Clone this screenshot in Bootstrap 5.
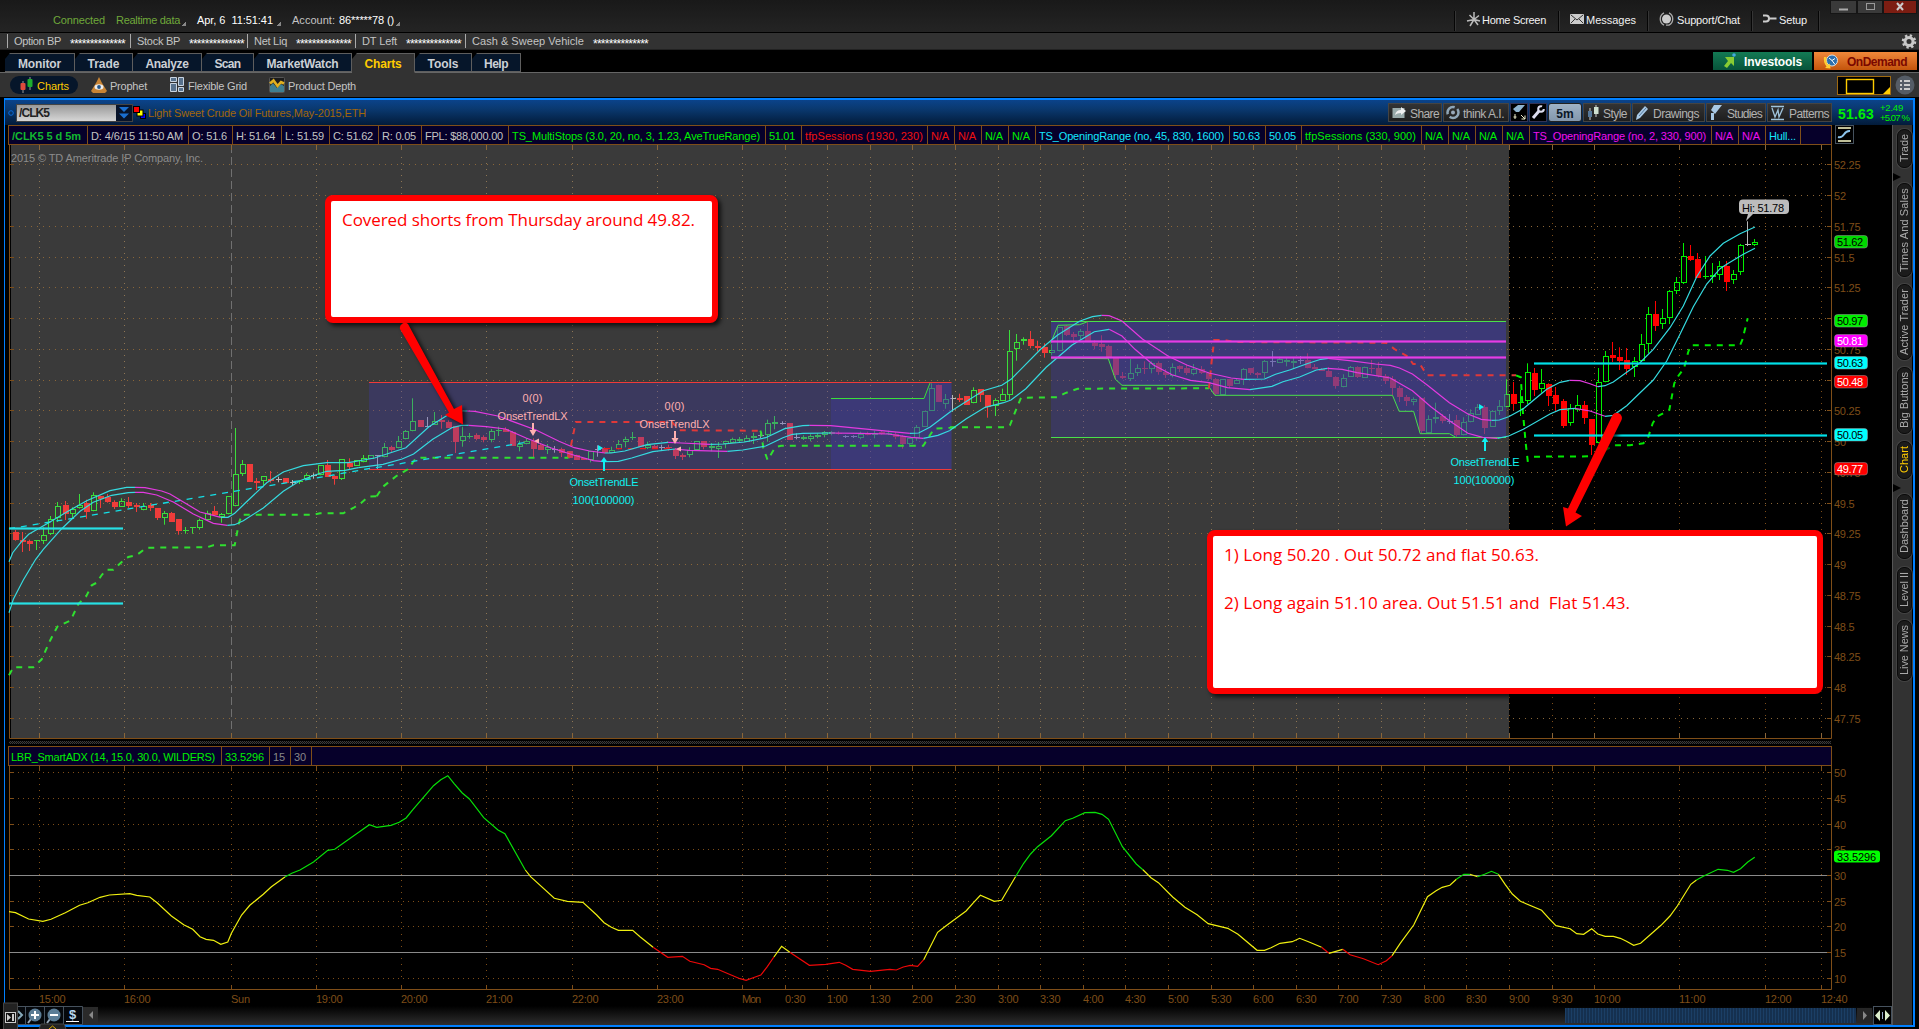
<!DOCTYPE html>
<html lang="en">
<head>
<meta charset="utf-8">
<title>Charts - /CLK5</title>
<link href="https://cdn.jsdelivr.net/npm/bootstrap@5.3.0/dist/css/bootstrap.min.css" rel="stylesheet">
<style>
body{background:#000;font:11px/1 "Liberation Sans",Arial,sans-serif;color:#c4c4c4;width:1919px;height:1029px;overflow:hidden}
svg{display:block;flex:none}
text{font-family:"Liberation Sans",Arial,sans-serif}
span{white-space:nowrap}
.app{height:1029px}
.topbar{height:32px;background:linear-gradient(#191919,#242424);padding-left:53px}
.topbar .stat{height:41px;margin-right:11px}
.tri{width:4px;height:4px;background:linear-gradient(135deg,transparent 50%,#888 50%);margin:6px 0 0 2px}
.menu-i{height:20px;border-left:1px solid #050505;box-shadow:inset 1px 0 #353535;color:#f2f2f2;margin-top:11px;padding:1px 0 0 11px}
.menu-i span{padding-top:3px}
.winbtn{height:14px;background:#3a3a3a;border:1px solid #151515}
.info{height:18px;background:#323232;border-top:1px solid #000;border-bottom:1px solid #222;padding-left:7px}
.info .fld{border-left:1px solid #aaa;padding-left:6px;height:14px}
.stars{color:#fff;padding-top:5px;font-size:12px}
.tabs{height:22px;padding-left:5px;border-bottom:1px solid #666;margin-top:1px}
.tabx{height:19px;background:#06162a;border:1px solid #5e5e5e;border-left:0;font-weight:700;font-size:12px;color:#ccd0d6;padding-top:2px;clip-path:polygon(5px 0,100% 0,100% 100%,0 100%,0 6px)}
.tabx.on{background:#323232;color:#fc0;height:20px;margin-bottom:-1px;border-bottom-color:#323232}
.subnav{height:25px;background:#323232;border-bottom:1px solid #000;padding-left:10px}
.subnav span,.tbtn span,.phead>span,.promo span{position:relative;top:1px}
.pill{width:68px;height:18px;border-radius:9px;background:#06162a;color:#fc0;padding-left:9px}
.promo{height:18px;font-weight:700;font-size:12px;margin-top:1px}
.frame{border-left:1px solid #0080ff;border-right:2px solid #0080ff;border-bottom:2px solid #0080ff;margin:0 4px 0 4px;height:929px}
.phead{height:27px;background:linear-gradient(#0b438a,#0a3970 35%,#021b3a);border-top:2px solid #0080ff;padding-left:3px}
.symbox{width:117px;height:18px;background:linear-gradient(#999,#d6d6d6);border:1px solid #444;color:#222;font-weight:700;font-size:12px}
.tbtn{height:19px;background:linear-gradient(#333,#1e1e1e);border:1px solid #444;color:#b2b2b2;font-size:12px}
.tbtn.dk{background:#000;border-color:#335}
.labels{height:20px;border:1px solid #7f4e18;background:#06002a}
.labels>span{border-right:1px solid #7f4e18;height:18px;line-height:18px;padding:1px 0 0 3px;flex:none}
.g{color:#00f000}.r{color:#f01010}.c{color:#14e8ff}.m{color:#f010f0}
.splitter{height:7px;background:repeating-conic-gradient(#3c3c3c 0 25%,#0a0a0a 0 50%) 0 0/2px 2px;border-top:2px solid #000;border-bottom:2px solid #000;width:1822px}
.side{width:20px;background:#323232;border-left:1px solid #555;padding-top:4px}
.vtab{writing-mode:vertical-rl;transform:rotate(180deg);width:15px;border-radius:7px;background:#1c1c1c;border:1px solid #0a0a0a;box-shadow:0 0 0 1px #424242;color:#aaa;margin-left:4px;flex:none}
.notch{width:8px;height:8px;background:#000;clip-path:polygon(0 0,100% 50%,0 100%)}
.scroll{height:19px;background:linear-gradient(#000,#2e2e2e)}
.thumb{width:291px;height:15px;margin-top:2px;background:repeating-linear-gradient(90deg,#1b3f66 0 1px,#15304f 1px 3px)}
.note{position:absolute;background:#fff;border:6px solid red;border-radius:8px;box-shadow:3px 3px 4px rgba(0,0,0,.7);color:red;font:17px/24px "Open Sans","Noto Sans",sans-serif;padding:7px 11px}
.n1{left:325px;top:195px;width:393px;height:128px}
.n2{left:1207px;top:530px;width:616px;height:164px}
.arrows,.dock{position:absolute}
.arrows{left:0;top:0;pointer-events:none;filter:drop-shadow(3px 2px 2px rgba(0,0,0,.7))}
.dock{left:3px;top:1002px}
</style>
<script src="https://cdn.jsdelivr.net/npm/bootstrap@5.3.0/dist/js/bootstrap.bundle.min.js"></script>
</head>
<body>
<div class="app position-relative d-flex flex-column">

<header class="topbar d-flex">
  <div class="stat d-flex align-items-center" style="color:#6fa83a"><span data-w="52">Connected</span></div>
  <div class="stat d-flex align-items-center" style="color:#6fa83a"><span data-w="64">Realtime data</span><i class="tri"></i></div>
  <div class="stat d-flex align-items-center text-white"><span data-w="76">Apr, 6 &nbsp;11:51:41</span><i class="tri ms-1"></i></div>
  <div class="stat d-flex align-items-center"><span data-w="43">Account:</span><span class="text-white ms-1" data-w="55">86*****78 ()</span><i class="tri"></i></div>
  <div class="ms-auto d-flex">
    <div class="menu-i d-flex" style="width:104px"><svg width="16" height="15" viewBox="0 0 16 15"><path d="M8 7.500V0M8 7.500L3.500 3M8 7.500L13 3.500M8 7.500L1 9M8 7.500L14 9M8 7.500L4 14M8 7.500L12 13" stroke="#bbb" stroke-width="1.500"/></svg><span data-w="64">Home Screen</span></div>
    <div class="menu-i d-flex" style="width:89px"><svg width="16" height="15" viewBox="0 0 16 15"><rect y="2" width="14" height="10" rx="1" fill="#ccc"/><path d="M1 3l6 5 6-5M1 11l4-4M13 11L9 7" stroke="#333" fill="none"/></svg><span data-w="50">Messages</span></div>
    <div class="menu-i d-flex" style="width:104px"><svg width="18" height="15" viewBox="0 0 18 15"><circle cx="7.500" cy="7" r="4.500" fill="#ccc"/><path d="M5 .8A7 7 0 0 0 5 13.200M10 .8A7 7 0 0 1 10 13.200H7" stroke="#aaa" fill="none" stroke-width="1.300"/></svg><span data-w="63">Support/Chat</span></div>
    <div class="menu-i d-flex" style="width:67px"><svg width="16" height="15" viewBox="0 0 16 15"><path d="M0 3.500h3a3 3 0 0 1 0 6H0M5.500 6.500h8" stroke="#ccc" stroke-width="2" fill="none"/></svg><span data-w="28">Setup</span></div>
    <div class="menu-i" style="width:12px"></div>
    <div class="winbtn" style="width:27px"><svg width="25" height="12"><path d="M8 8.500h9" stroke="#aaa" stroke-width="2"/></svg></div>
    <div class="winbtn" style="width:26px"><svg width="24" height="12"><rect x="8.500" y="2.500" width="8" height="6" fill="none" stroke="#999"/></svg></div>
    <div class="winbtn" style="width:34px;background:#7c1d12;margin-right:2px"><svg width="32" height="12"><path d="M13 2l6 7M19 2l-6 7" stroke="#ccc" stroke-width="2"/></svg></div>
  </div>
</header>

<section class="info d-flex align-items-center">
  <div class="fld d-flex align-items-center" style="width:123px"><span data-w="47">Option BP</span><span class="stars" style="margin-left:9px" data-w="55">**************</span></div>
  <div class="fld d-flex align-items-center" style="width:117px"><span data-w="43">Stock BP</span><span class="stars" style="margin-left:9px" data-w="55">**************</span></div>
  <div class="fld d-flex align-items-center" style="width:108px"><span data-w="33">Net Liq</span><span class="stars" style="margin-left:9px" data-w="55">**************</span></div>
  <div class="fld d-flex align-items-center" style="width:110px"><span data-w="35">DT Left</span><span class="stars" style="margin-left:9px" data-w="55">**************</span></div>
  <div class="fld d-flex align-items-center"><span data-w="112">Cash &amp; Sweep Vehicle</span><span class="stars" style="margin-left:9px" data-w="55">**************</span></div>
  <svg class="ms-auto" style="margin-right:2px" width="16" height="15" viewBox="-8 -7.500 16 15"><circle r="4" fill="none" stroke="#c8c8c8" stroke-width="3"/><circle r="6" fill="none" stroke="#c8c8c8" stroke-width="2.500" stroke-dasharray="2.300 2.412"/></svg>
</section>

<nav class="tabs d-flex align-items-end">
  <div class="tabx d-flex justify-content-center align-items-center" style="width:70px"><span data-w="43">Monitor</span></div>
  <div class="tabx d-flex justify-content-center align-items-center" style="width:58px"><span data-w="32">Trade</span></div>
  <div class="tabx d-flex justify-content-center align-items-center" style="width:69px"><span data-w="43">Analyze</span></div>
  <div class="tabx d-flex justify-content-center align-items-center" style="width:52px"><span data-w="26">Scan</span></div>
  <div class="tabx d-flex justify-content-center align-items-center" style="width:98px"><span data-w="72">MarketWatch</span></div>
  <div class="tabx on d-flex justify-content-center align-items-center" style="width:63px"><span data-w="37">Charts</span></div>
  <div class="tabx d-flex justify-content-center align-items-center" style="width:57px"><span data-w="31">Tools</span></div>
  <div class="tabx d-flex justify-content-center align-items-center" style="width:49px"><span data-w="24">Help</span></div>
  <div class="ms-auto d-flex align-self-start" style="gap:2px;margin-right:2px">
    <div class="promo d-flex align-items-center text-white" style="width:99px;background:linear-gradient(#137a54,#07533a);padding-left:9px"><svg width="22" height="18" viewBox="0 0 22 18"><path d="M3 5h9v9l-3-3-4 5-3-2 4-5z" fill="#8c3"/><circle cx="12" cy="3" r="1.800" fill="#4ad"/></svg><span data-w="58">Investools</span></div>
    <div class="promo d-flex align-items-center" style="width:103px;background:linear-gradient(#f0883a,#c4540c);color:#7a0800;padding-left:9px"><svg width="24" height="18" viewBox="0 0 24 18"><circle cx="9" cy="8.500" r="5.500" fill="#2d6fae" stroke="#ddd"/><path d="M6 6l3 2.500 3 4M9 8.500l3-2" stroke="#fff" fill="none"/><path d="M3.500 5q-1 5 2 8l1.500-1.500.5 5-5.500-.5 1.500-1.500Q0 10 1 5z" fill="#fc3"/></svg><span data-w="60">OnDemand</span></div>
  </div>
</nav>

<section class="subnav d-flex align-items-center">
  <div class="pill d-flex align-items-center"><svg width="18" height="16" viewBox="0 0 18 16"><path d="M4 4v12M11 0v13" stroke="#999"/><rect x="1.500" y="6" width="5" height="7" rx="1" fill="#e04a3c"/><rect x="8.500" y="2" width="5" height="8" rx="1" fill="#1eae2e"/></svg><span data-w="32">Charts</span></div>
  <svg style="margin-left:13px" width="19" height="17" viewBox="0 0 19 17"><path d="M8 0l3 6 5 8-2 2H2l-2-2 5-8z" fill="#c88434"/><ellipse cx="8" cy="10" rx="4.500" ry="2.800" fill="#eee"/><circle cx="8" cy="10" r="1.900" fill="#258"/></svg><span data-w="37">Prophet</span>
  <svg style="margin-left:23px" width="18" height="16" viewBox="0 0 18 16"><path d="M.5 .5h6v4h-6zM8.500 .5h5v8h-5zM.5 6.500h6v8h-6zM8.500 10.500h5v4h-5z" fill="#57718c" stroke="#c8d4e0"/></svg><span data-w="59">Flexible Grid</span>
  <svg style="margin-left:22px" width="19" height="16" viewBox="0 0 19 16"><rect x=".5" y=".5" width="15" height="15" rx="1" fill="#1c1c1c" stroke="#555"/><path d="M1 9l3-3 4 5 4-4 3 2v6H1z" fill="#3f7f90"/><path d="M1 6.500L4.500 3.500l4 5.500 3.500-4 3 1.500" stroke="#e0b020" stroke-width="2.600" fill="none"/></svg><span data-w="68">Product Depth</span>
  <svg class="ms-auto" width="54" height="19" viewBox="0 0 54 19"><rect x=".5" y=".5" width="53" height="18" fill="#000" stroke="#a06a10"/><rect x="9.500" y="3.500" width="27" height="14" fill="none" stroke="#fc0" stroke-width="1.400"/><path d="M53 11v7h-7z" fill="#fc0"/></svg>
  <svg class="ms-1" style="margin-right:4px" width="20" height="20" viewBox="0 0 20 20"><circle cx="10" cy="10" r="9.500" fill="#555c66"/><path d="M5 6h2M9 6h6M5 10h2M9 10h6M5 14h2M9 14h6" stroke="#ccc" stroke-width="2"/></svg>
</section>

<main class="frame d-flex flex-column">
  <div class="phead d-flex align-items-center">
    <svg width="8" height="10"><circle cx="3" cy="5" r="2.300" fill="none" stroke="#0a6ad8"/></svg>
    <div class="symbox d-flex align-items-center justify-content-between"><span style="padding:1px 0 0 2px" data-w="32">/CLK5</span><svg width="16" height="16" viewBox="0 0 16 16"><rect width="16" height="16" fill="#08142a"/><path d="M3 2h10L8 7zM3 8.500h10l-5 5z" fill="#1a6fd0"/></svg></div>
    <svg width="15" height="14" viewBox="0 0 15 14"><rect x="7.500" y="7.500" width="5" height="5" fill="#00f" stroke="#000"/><rect x="4" y="4" width="6" height="6" fill="#ff0" stroke="#000"/><rect x=".5" y=".5" width="6" height="6" fill="#f00" stroke="#000"/></svg>
    <span style="color:#a3660a" data-w="218">Light Sweet Crude Oil Futures,May-2015,ETH</span>
    <div class="ms-auto d-flex align-items-center" style="gap:1px">
      <div class="tbtn d-flex align-items-center" style="width:54px;padding-left:3px"><svg width="18" height="14" viewBox="0 0 18 14"><rect x=".5" y="2" width="12" height="10" fill="#9aa"/><path d="M3 9q1-5 6-5V1l5 4-5 4V7Q5 7 3 9" fill="#eee"/></svg><span data-w="29">Share</span></div>
      <div class="tbtn d-flex align-items-center" style="width:66px;padding-left:2px"><svg width="17" height="15" viewBox="0 0 17 15"><circle cx="7" cy="7.500" r="5.500" fill="none" stroke="#8fa6b8" stroke-width="2.500" stroke-dasharray="12 3"/><circle cx="7" cy="7.500" r="2" fill="#9ab"/></svg><span data-w="41">think A.I.</span></div>
      <div class="tbtn dk" style="width:18px"><svg width="16" height="17" viewBox="0 0 16 17"><path d="M7 1h7L8 8H5L2 5z" fill="#8fb4d0"/><path d="M4 10v5M2.500 13h3M10 11l4 4M14 11.500V15h-3.500" stroke="#eec" fill="none"/></svg></div>
      <div class="tbtn dk" style="width:18px"><svg width="16" height="17" viewBox="0 0 16 17"><path d="M3 14l6-7" stroke="#dde" stroke-width="3"/><circle cx="11" cy="5" r="2.800" fill="none" stroke="#dde" stroke-width="2" stroke-dasharray="14 4"/></svg></div>
      <div class="tbtn d-flex justify-content-center" style="width:34px;background:linear-gradient(#9fb2c6,#8397ad);border-color:#222;border-radius:3px;color:#0a1626;font-weight:700"><span style="padding-top:3px">5m</span></div>
      <div class="tbtn d-flex align-items-center" style="width:48px;padding-left:3px"><svg width="16" height="15" viewBox="0 0 16 15"><path d="M3 3v12M9 0v12" stroke="#ccc"/><rect x="1" y="6" width="4" height="6" fill="#579"/><rect x="7" y="2" width="4.500" height="7" fill="#cfe0cf"/></svg><span data-w="24">Style</span></div>
      <div class="tbtn d-flex align-items-center" style="width:73px;padding-left:2px"><svg width="18" height="16" viewBox="0 0 18 16"><path d="M1 15l1-5L10 1l3 3-8 9z" fill="#a8c8e4"/><path d="M4 11l7-8" stroke="#579"/></svg><span data-w="46">Drawings</span></div>
      <div class="tbtn d-flex align-items-center" style="width:60px;padding-left:1px"><svg width="19" height="16" viewBox="0 0 19 16"><path d="M6 0h8L7 9 3 5zM3 8h3v7H3z" fill="#a8c8e4"/></svg><span data-w="35">Studies</span></div>
      <div class="tbtn d-flex align-items-center" style="width:65px;padding-left:2px"><svg width="19" height="16" viewBox="0 0 19 16"><path d="M1 1.500h13M1 14.500h13M2 3l3 9 3-7 1 7 4-9" stroke="#9fc4dc" fill="none" stroke-width="1.300"/></svg><span data-w="40">Patterns</span></div>
    </div>
    <span class="g fw-bold" style="font-size:14px;margin-left:6px" data-w="36">51.63</span>
    <div class="g" style="font-size:9.500px;margin:1px 4px 0 6px;line-height:10px"><div><span data-w="23">+2.49</span></div><div><span data-w="29">+5.07 %</span></div></div>
  </div>

  <div class="d-flex flex-grow-1">
    <div class="d-flex flex-column" style="width:1887px">
      <div class="d-flex" style="padding-left:3px">
        <div class="labels d-flex" style="width:1824px">
          <span style="width:79px;color:#12b830;font-weight:700" data-t="69">/CLK5 5 d 5m</span>
          <span style="width:101px" data-t="92">D: 4/6/15 11:50 AM</span>
          <span style="width:44px" data-t="35">O: 51.6</span><span style="width:49px" data-t="39">H: 51.64</span><span style="width:48px" data-t="39">L: 51.59</span><span style="width:49px" data-t="40">C: 51.62</span><span style="width:43px" data-t="34">R: 0.05</span><span style="width:87px" data-t="78">FPL: $88,000.00</span>
          <span class="g" style="width:257px" data-t="248">TS_MultiStops (3.0, 20, no, 3, 1.23, AveTrueRange)</span><span class="g" style="width:36px" data-t="26">51.01</span>
          <span class="r" style="width:126px" data-t="118">tfpSessions (1930, 230)</span><span class="r" style="width:27px" data-t="18">N/A</span><span class="r" style="width:27px" data-t="18">N/A</span><span class="g" style="width:27px" data-t="18">N/A</span><span class="g" style="width:27px" data-t="18">N/A</span>
          <span class="c" style="width:194px" data-t="185">TS_OpeningRange (no, 45, 830, 1600)</span><span class="c" style="width:36px" data-t="27">50.63</span><span class="c" style="width:36px" data-t="27">50.05</span>
          <span class="g" style="width:120px" data-t="111">tfpSessions (330, 900)</span><span class="g" style="width:27px" data-t="18">N/A</span><span class="g" style="width:27px" data-t="18">N/A</span><span class="g" style="width:27px" data-t="18">N/A</span><span class="g" style="width:27px" data-t="18">N/A</span>
          <span class="m" style="width:182px" data-t="173">TS_OpeningRange (no, 2, 330, 900)</span><span class="m" style="width:27px" data-t="18">N/A</span><span class="m" style="width:27px" data-t="18">N/A</span><span class="c" style="width:35px" data-t="27">Hull...</span>
        </div>
        <svg style="margin-left:3px" width="19" height="19" viewBox="0 0 19 19"><rect x=".5" y=".5" width="18" height="18" fill="#000" stroke="#46525e"/><path d="M3 3h13M3 16h13" stroke="#ffc" stroke-width="1.500"/><path d="M3 12c7 2 5-7 12-6" stroke="#8cc4ec" stroke-width="2" fill="none"/></svg>
      </div>
      <svg id="price" width="1887" height="594" viewBox="5 145 1887 594"></svg>
      <div style="padding-left:4px"><div class="splitter"></div></div>
      <div style="padding-left:3px"><div class="labels d-flex" style="width:1824px">
        <span class="g" style="width:213px;padding-left:2px" data-t="204">LBR_SmartADX (14, 15.0, 30.0, WILDERS)</span><span class="g" style="width:48px" data-t="39">33.5296</span><span style="width:21px;color:#888" data-t="12">15</span><span style="width:21px;color:#888" data-t="12">30</span>
      </div></div>
      <svg id="adx" width="1887" height="240" viewBox="5 766 1887 240"></svg>
      <div class="scroll d-flex" style="padding-left:12px">
        <svg width="66" height="19" viewBox="17 0 66 19"><path d="M17 .5H82.500V18.500H17M25.500 0V19M44.500 0V19M63.500 0V19" fill="#05080c" stroke="#46525e"/><path d="M18 5l4 4-4 4" stroke="#8ab" stroke-width="2" fill="none"/><path d="M31 13l-3 4M50 13l-3 4" stroke="#9ab" stroke-width="2"/><circle cx="35" cy="9" r="6.500" fill="#5b7d96"/><circle cx="54" cy="9" r="6.500" fill="#5b7d96"/><path d="M35 5v8M31 9h8M50 9h8" stroke="#fff" stroke-width="2"/><path d="M66 15.500h13" stroke="#fff"/><text x="69" y="13" font-size="13" font-weight="700" fill="#b8d8f0">$</text></svg>
        <svg width="15" height="19"><rect y="1" width="15" height="16" fill="#2a2a2a"/><path d="M10 5v8L6 9z" fill="#888"/></svg>
        <div class="thumb ms-auto"></div>
        <svg width="17" height="19"><rect x="1" y="2" width="15" height="15" fill="#262626"/><path d="M7 5v9l4-4.500z" fill="#888"/></svg>
        <svg width="19" height="19"><rect x=".5" y=".5" width="18" height="18" fill="#000" stroke="#46525e"/><path d="M7 4v11L2 9.500zM12 4v11l5-5.500z" fill="#dec"/><path d="M9.500 6v7" stroke="#9ac"/></svg>
      </div>
    </div>
    <aside class="side d-flex flex-column">
      <div class="vtab d-flex align-items-center justify-content-center" style="height:39px"><span data-h="28">Trade</span></div>
      <i class="notch" style="margin:5px 0 2px"></i>
      <div class="vtab d-flex align-items-center justify-content-center" style="height:94px"><span data-h="84">Times And Sales</span></div>
      <div class="vtab d-flex align-items-center justify-content-center" style="height:76px;margin-top:7px"><span data-h="66">Active Trader</span></div>
      <div class="vtab d-flex align-items-center justify-content-center" style="height:67px;margin-top:7px"><span data-h="56">Big Buttons</span></div>
      <div class="vtab d-flex align-items-center justify-content-center" style="height:38px;margin-top:7px;color:#fc0"><span data-h="27">Chart</span></div>
      <i class="notch" style="margin:5px 0 2px"></i>
      <div class="vtab d-flex align-items-center justify-content-center" style="height:65px"><span data-h="54">Dashboard</span></div>
      <div class="vtab d-flex align-items-center justify-content-center" style="height:46px;margin-top:8px"><span data-h="35">Level II</span></div>
      <div class="vtab d-flex align-items-center justify-content-center" style="height:61px;margin-top:7px"><span data-h="50">Live News</span></div>
    </aside>
  </div>
</main>

<svg class="dock" width="64" height="27" viewBox="3 1002 64 27"><rect x="3.500" y="1003" width="14" height="27" fill="#222" stroke="#444"/><rect x="5.500" y="1012.500" width="10" height="10" fill="#111" stroke="#ccc"/><path d="M7 1014v7l4-3.500zM12 1014h2v7h-2z" fill="#ccc"/><path d="M39 1029l2-5h23l2 5" fill="#222" stroke="#444"/><path d="M49 1029l3.500-3 3.500 3" stroke="#da0" fill="none"/></svg>

<div class="note n1"><span data-w="353">Covered shorts from Thursday around 49.82.</span></div>
<div class="note n2"><span data-w="315">1) Long 50.20 . Out 50.72 and flat 50.63.</span><br><br><span data-w="406">2) Long again 51.10 area. Out 51.51 and &nbsp;Flat 51.43.</span></div>
<svg class="arrows" width="1919" height="1029"><g fill="#f00"><path d="M400 329a5 5 0 0 1 8-5L454 409 462 405 463 424.500 445 415 449 412.500z"/><path d="M1612 416a5 5 0 0 1 9.500 4L1575.500 512.500 1582 516 1566 526.500 1563 507 1568 508.500z"/></g></svg>
</div>

<script>
const X=[39.5,124.5,231.5,316.5,401.5,486.5,572.5,657.5,742.5,785.5,827.5,870.5,912.5,955.5,998.5,1040.5,1083.5,1125.5,1168.5,1211.5,1253.5,1296.5,1338.5,1381.5,1424.5,1466.5,1509.5,1552.5,1594.5,1679.5,1765.5,1821.5];
const T=['15:00','16:00','Sun','19:00','20:00','21:00','22:00','23:00','Mon','0:30','1:00','1:30','2:00','2:30','3:00','3:30','4:00','4:30','5:00','5:30','6:00','6:30','7:00','7:30','8:00','8:30','9:00','9:30','10:00','11:00','12:00','12:40'];
const BR='#7f4e18';
const rect=(x,y,w,h,f,e='')=>`<rect x="${x}" y="${y}" width="${w}" height="${h}" fill="${f}" ${e}/>`;
const path=(d,s,w=1,e='')=>`<path d="${d}" fill="none" stroke="${s}" stroke-width="${w}" ${e}/>`;
const txt=(x,y,t,f,w,e='')=>`<text x="${x}" y="${y}" fill="${f}" font-size="11" ${w?`textLength="${w}"`:''} ${e}>${t}</text>`;
/* A sheet holds points on its own scale: origin x, origin y, x scale. The y scale is 3. */
const S={A:[0,430,3],B:[360,370,2.613],C:[950,300,2.703],D:[1480,150,3],E:[0,730,2.45],F:[640,730,2.45],G:[1280,730,2.454]};
const pts=(s,str)=>str.trim().split(/\s+/).map(p=>{const[a,b]=p.split(',');const o=S[s];return[(o[0]+a/o[2]).toFixed(1),(o[1]+b/3).toFixed(1)]});
const d=a=>'M'+a.map(p=>p.join(' ')).join('L');
/* draws consecutive coloured segments, each joined to the end of the last one */
function chain(segs,col,w,e){let last=null,o='';for(const[s,c,p]of segs){let a=pts(s,p);if(last)a.unshift(last);last=a[a.length-1];o+=path(d(a),col[c],w,e)}return o}

/* ---- price pane ---- */
const bars={A:`r300,306,330,332 r306,331,336,366 r329,333,342,363 g331,331,334,360 g292,314,332,342 g258,266,311,315 g216,227,265,276 r213,225,252,270 g232,236,252,265 g192,226,234,236 r209,219,246,266 g187,196,244,244 r197,198,207,234 r192,202,216,218 r211,216,231,237 g205,214,230,230 r201,216,228,234 r219,225,232,246 g219,229,241,241 r219,226,234,243 r234,234,264,270 g243,250,265,284 r246,249,276,276 r267,267,302,314 g291,300,302,311 g292,292,295,311 g266,269,293,299 g242,248,269,269 r228,243,256,256 g249,253,262,278 g199,199,253,253 g-6,133,229,229 g90,103,131,138 r102,102,156,156 r144,153,158,180 g139,139,154,165 r123,148,153,158 w140,147,149,157 r144,144,158,158 w150,157,159,168 g150,152,154,162 g130,136,148,148 w130,136,139,146 g106,106,136,136 r90,105,140,140 r136,138,147,164 g88,88,146,150 r85,99,110,118 g91,91,107,107 g75,85,97,97 g76,76,87,87 w76,76,78,117 g39,52,82,82 r47,51,60,66 g18,34,55,55`,
B:`g180,184,208,208 g85,154,184,184 r150,150,170,170 w141,168,170,172 g126,153,164,164 r135,151,157,176 r151,157,173,173 r168,168,215,249 g170,198,214,230 g189,198,202,206 r190,195,207,211 r196,202,210,217 g177,182,210,217 g170,180,182,198 r172,177,185,185 r183,186,228,228 g212,222,230,244 g204,213,223,223 r205,213,236,264 r221,226,240,240 g222,232,239,252 w228,236,238,248 r233,238,250,261 r244,244,265,265 r254,254,269,269 r264,264,270,270 g242,242,270,277 w226,236,238,260 r232,234,248,250 g230,240,248,248 g210,222,238,238 g200,206,217,232 g186,202,205,210 r202,202,230,230 g215,225,235,237 r224,229,234,236 w224,232,234,242 r224,230,234,242 r234,237,258,267 r250,256,260,270 g232,240,256,262 g214,214,241,241 r213,213,230,238 g219,227,234,244 g216,228,238,264 g212,214,222,235 g203,207,218,218 g201,206,214,216 g196,203,215,215 g188,197,204,222 w190,195,198,205 g149,159,196,215 g138,157,161,178 w154,159,161,164 r159,159,210,210 w190,202,204,208 g196,201,206,210 g193,198,206,214 g190,195,200,205 g183,186,195,202 g183,187,193,196 r184,190,192,194 w196,199,201,204 w196,199,201,204 g185,193,205,208 r185,189,194,196 g182,190,195,205 r182,185,192,194 g182,188,190,195 r186,191,201,208 r195,199,222,236 g205,205,222,231 g165,172,205,212 g124,124,170,170 g40,53,122,122 r44,46,95,95 g72,87,101,116 w75,83,86,125`,
C:`r281,295,299,306 r288,288,314,314 g262,270,310,310 r267,267,285,306 r285,285,320,353 g295,301,317,348 g266,283,303,303 g90,154,286,299 g102,127,146,182 g112,118,124,134 r93,118,137,145 r122,137,145,154 r130,141,158,173 g133,150,160,166 g82,82,154,154 r76,78,106,108 r96,102,110,130 g87,94,108,120 r66,94,126,126 r121,130,138,148 r106,132,141,155 r134,138,175,178 r172,172,225,238 r216,228,233,237 g176,220,238,243 g193,205,220,228 r184,204,208,222 g184,190,206,220 r184,190,217,224 r207,216,225,234 g190,200,229,232 r196,198,206,216 r194,204,219,225 g192,208,222,226 r198,206,218,222 r217,219,237,242 r234,238,283,287 g238,238,284,284 r237,238,258,264 g234,240,252,252 g204,208,240,255 r205,205,219,225 r216,219,225,234 g180,184,220,234 w153,182,184,200 g170,176,188,189 g174,180,187,199 g172,183,189,205 w168,180,182,192 r160,180,205,205 r192,200,206,208 r204,206,213,213 r201,213,231,231 r229,231,258,266 g223,235,262,262 g198,202,231,231 r199,202,231,234 g200,202,234,234 r180,204,206,220 r186,204,228,232 r222,228,243,252 r228,237,265,285 r258,264,291,306 r285,291,303,318 g292,298,306,316 r294,295,393,400 g346,357,400,400 g308,350,358,370 r342,348,364,370 w342,363,365,372 r345,360,405,410 g352,366,406,406 g328,338,367,367 g312,322,345,345 r315,321,384,402 g330,333,380,380 g300,318,333,345 g238,282,322,322`,
D:`r696,732,762,780 g720,755,760,798 g640,667,754,762 r654,669,720,738 g657,700,718,728 r700,702,738,768 r711,735,762,783 r747,753,828,834 g762,774,820,827 g735,766,780,785 r753,766,804,822 r807,807,885,915 g654,697,880,880 g603,619,697,697 r576,615,624,636 r592,621,632,660 r594,630,657,675 g621,632,652,681 g552,583,632,636 g471,493,583,610 r453,492,528,543 g477,505,523,537 g420,424,505,522 g381,397,422,432 g279,319,398,402 r285,318,329,333 r309,327,384,384 g318,378,382,387 g339,376,380,399 g333,349,376,390 r333,348,396,423 g360,373,391,402 g282,286,367,375 w214,283,285,288 g267,276,284,288`};
const dim={g:'#3ade3a',r:'#ef3c3a',w:'#b8b8b8'},lit={g:'#00f000',r:'#ff0000',w:'#b8b8b8'};
let o=rect(11,145,1498,593,'#3a3a3a');
for(const x of X)o+=x==231.5?path(`M${x} 145V737`,'#707070',1,'stroke-dasharray="8 4"'):path(`M${x} 157V737`,x>1509?BR:'#8d7554',1,'stroke-dasharray="1 5"');
const P=[];for(let p=52.25;p>=47.7;p-=.25)P.push(p);
const gy=p=>Math.round(441.2+(50-p)*123)+.5;
for(const p of P){const y=gy(p);o+=path(`M13 ${y}H1831`,'#8b6638',1,'stroke-dasharray="1 5"')+path(`M9 ${y}h5M1827 ${y}h5`,BR)}
for(const x of X)o+=path(`M${x} 145v5M${x} 733v5`,'#8b6638');
o+=path('M9.500 145V738.500H1831.500V145',BR);
let cs='',i=0;
for(const k in bars)for(const b of bars[k].split(' ')){
 const x=Math.round(14.8+7.1*i),c=(x>1507?lit:dim)[b[0]],[h,t,l,w]=b.slice(1).split(',').map(v=>S[k][1]+v/3);
 const T0=Math.round(t),L0=Math.max(Math.round(l),T0+1);
 cs+=path(`M${x+.5} ${h.toFixed(1)}V${T0}M${x+.5} ${L0}V${w.toFixed(1)}`,c);
 if(b[0]=='g'&&L0-T0>2)cs+=rect(x-2+.5,T0+.5,5,L0-T0-1,'none',`stroke="${c}"`);
 else cs+=rect(x-2,T0,6,L0-T0,c);
 i++}
o+=cs;
o+=rect(369,383,582.500,87,'#403ac0','fill-opacity=".28"')+path('M369 382.500H951.500M369 469.500H951.500','#f03a3a');
o+=`<path d="M831 398.500H924L930 383H951.500V469H831z" fill="#3e38a5" fill-opacity=".35"/>`;
o+=path('M831 398.500H924L930 383','#3ade3a');
o+=rect(1051,321,455,116,'#403ac0','fill-opacity=".28"');
const low=pts('C','273,174 428,176 447,238 465,256 697,256 716,286 1196,286 1214,334 1253,334 1271,401 1350,401 1367,412');
o+=`<path d="${d(low)}L1506 437V321H1051z" fill="#3e38a5" fill-opacity=".35"/>`;
o+=path(d(low)+'M1051 321.500H1506M1051 437.500H1506'+d(pts('C','272,130 292,76 350,74 370,66')),'#4ae04a');
const dg={g:'#30e030',r:'#e03838',R:'#f00',G:'#00f000'};
o+=chain([['A','g','27,736 40,712 100,712 125,688 150,632 172,590 212,571 235,522 258,500 275,466 290,458 305,435 320,419 340,419 365,396 385,381 410,375 440,353 620,352 640,346 704,346 717,278 726,254 940,254 960,250 1030,250 1060,234 1080,222 1105,200 1130,199'],['B','g','60,350 95,318 125,298 145,266 160,263 545,263'],['B','r','552,222 564,156 815,156 835,181 1046,182'],['B','g','1048,188 1054,235 1065,270 1085,232 1100,227 1472,227 1500,176 1564,172']],dg,2,'stroke-dasharray="6 6"');
o+=chain([['C','g','0,382 150,382 162,376 180,325 192,293 290,292 310,280 345,266 700,265'],['C','r','707,185 714,120 740,120 770,126 1160,128 1180,129 1205,150 1235,168 1252,192 1270,192 1290,226 1530,226'],['C','G','1543,232 1548,330 1556,430 1562,487']],dg,2,'stroke-dasharray="6 6"');
o+=path(d(pts('D','162,920 345,919 400,886 450,886 490,880 503,866 518,820 530,800 568,780 583,700 595,678 612,655 625,605 633,586 780,586 787,570 803,505')),'#00e800',2,'stroke-dasharray="6 6"');
o+=path(d(pts('A','27,296 200,268 390,236 560,208 690,186 850,160 900,152 1000,135 1100,117').concat(pts('B','100,282 200,262 434,217'))),'#14dfe6',1.300,'stroke-dasharray="6 6"');
o+=path('M604 448.700H675','#f01818',1.300,'stroke-dasharray="6 6"');
const mc={c:'#35dbe0',m:'#e33ae0'};
o+=chain([['A','c','27,395 38,368 62,338 86,313 150,276 200,246 260,212 330,182 380,172 405,172'],['A','m','435,173 485,183 510,192 560,222 600,246 640,256 662,262'],['A','c','684,262 704,250 735,220 800,158 850,126 910,107 980,98 1045,98 1075,93'],['B','c','38,264 64,254 120,233 180,170 228,136 265,123 280,123'],['B','m','300,124 360,138 460,180 520,214 560,233 600,243 640,249'],['B','c','656,249 692,243 750,224 805,217'],['B','m','840,219 915,223'],['B','c','950,222 1005,216 1060,203 1110,176 1157,167 1175,166'],['B','m','1230,167 1310,176 1437,190'],['B','c','1460,189 1490,171 1546,122'],['C','c','45,304 90,272 140,256 165,238 245,148 290,106 350,64 385,50 410,46'],['C','m','430,47 465,63 520,117 590,169 640,195 700,219 760,234 795,238'],['C','c','850,237 880,223 920,209 965,191 1002,178 1022,175'],['C','m','1080,182 1150,192 1190,196 1215,204 1250,222 1290,255 1350,308 1400,342 1436,358 1464,361'],['C','c','1485,360 1510,350'],['D','c','130,776 200,718 240,697 269,691'],['D','m','300,692 330,701 354,710'],['D','c','375,707 400,696 440,667 480,638 520,598 570,533 610,468 650,380 690,318 730,280 780,251 825,231']],mc,1.200);
o+=chain([['A','c','27,548 40,508 70,450 107,388 130,358 185,296 240,244 280,217 335,196 385,188 405,187'],['A','m','430,187 470,195 520,216 580,252 640,280 682,286'],['A','c','704,284 730,272 790,234 850,184 900,152 945,135 980,124 1035,121 1075,113'],['B','c','60,283 110,267 140,252 190,208 240,173 265,166 284,166'],['B','m','330,170 380,177 434,204 500,234 560,256 610,272 637,275'],['B','c','675,274 710,264 765,245 823,237'],['B','m','860,241 960,244'],['B','c','1000,240 1060,228 1105,203 1130,193 1157,190 1230,189'],['B','m','1310,190 1380,192 1440,202 1472,205'],['B','c','1510,196 1540,182'],['C','c','43,357 95,322 145,308 165,300 205,266 260,202 330,135 390,95 430,88'],['C','m','465,108 500,148 550,195 600,224 650,241 700,248 750,263 811,269'],['C','c','870,259 900,245 945,231 990,210 1020,205'],['C','m','1060,208 1100,218 1190,234 1250,272 1300,320 1350,362 1400,400 1440,412 1480,415'],['D','c','86,858 130,838 210,792 240,779 285,775'],['D','m','330,783 375,799'],['D','c','400,796 440,767 520,690 560,633 600,553 640,470 680,402 720,356 740,343 790,313 825,295']],mc,1.200);
for(const[x,y,w,c]of[[9,528.5,114,'#26e0e4'],[9,603.5,114,'#26e0e4'],[1534,363.5,293,'#00e0e8'],[1534,435.5,293,'#00e0e8'],[1051,341.5,455,'#e63ce6'],[1051,357.5,455,'#e63ce6']])o+=path(`M${x} ${y}h${w}`,c,3,'stroke-opacity=".6"')+path(`M${x} ${y}h${w}`,c,1.200);
const PK='#ffb0b0',CY='#10f0f0';
o+=txt(522.500,402,'0(0)',PK,20)+txt(497.500,420,'OnsetTrendLX',PK,70)+txt(664.500,410,'0(0)',PK,20)+txt(639.500,428,'OnsetTrendLX',PK,70);
o+=txt(569.500,486,'OnsetTrendLE',CY,69)+txt(572.500,504,'100(100000)',CY,62)+txt(1450.500,466,'OnsetTrendLE',CY,69)+txt(1453.500,484,'100(100000)',CY,61);
o+=`<path d="M532 423h2v7h2.500l-3.500 6-3.500-6H532zM674 431h2v7h2.500l-3.500 6-3.500-6H674zM539 438.500v5l-5-2.500zM681 446.500v5l-5-2.500z" fill="${PK}"/><path d="M603 471h2v-9h2.500l-3.500-5-3.500 5H603zM1484 451h2v-9h2.500l-3.500-5-3.500 5H1484zM598 445v6l5-3zM1479 404v6l5-3z" fill="${CY}"/>`;
o+=`<path d="M1743 199.500h42a4 4 0 0 1 4 4v6.500a4 4 0 0 1-4 4h-32l-7 7 2-7h-5a4 4 0 0 1-4-4v-6.500a4 4 0 0 1 4-4" fill="#bcbcbc"/>`+txt(1742,211.500,'Hi: 51.78','#000',42);
o+=txt(11,162,'2015 © TD Ameritrade IP Company, Inc.','#8c8c8c',192);
/* 51 and 50.5 lie wholly under value tags, so they carry no label */
for(const p of P)if(p!=51&&p!=50.5)o+=txt(1834,gy(p)+4.500,String(p),BR,p%1?(p*2%1?26.5:20.5):12);
for(const[y,t,f,c]of[[235.5,'51.62','#00d800','#000'],[314.5,'50.97','#00f000','#000'],[334.5,'50.81','#f0f','#fff'],[356.5,'50.63','#0ff','#000'],[375.5,'50.48','#f00','#fff'],[428.5,'50.05','#0ff','#000'],[462.5,'49.77','#f00','#fff']])o+=rect(1834.500,y,33,12.5,f,'rx="3" stroke="#999" stroke-opacity=".5"')+txt(1837,y+10.5,t,c,26);
price.innerHTML=o;

/* ---- ADX pane ---- */
o='';
for(const x of X)o+=path(`M${x} 778V982`,BR,1,'stroke-dasharray="1 5"')+path(`M${x} 766v5M${x} 985v4`,BR);
[[50,772],[45,798],[40,824],[35,849],[30,875],[25,901],[20,926],[15,952],[10,978]].forEach(([v,y])=>{y+=.5;
 o+=path(`M13 ${y}H1831`,BR,1,'stroke-dasharray="1 4"')+path(`M9 ${y}h5M1827 ${y}h5`,BR)+txt(1834,y+4.500,v,BR,12)});
o+=path('M9.500 766V989.500H1831.500V766',BR)+path('M9 875.500H1827M9 952.500H1827','#8a8a8a');
X.forEach((x,n)=>{const t=T[n];o+=txt(x-.5,1003,t,BR,t.length==5?26.5:t.length==4?20.5:19)});
o+=chain([['E','y','22,545 38,548 70,567 105,574 125,568 160,548 195,526 215,518 245,502 268,495 318,491 335,496 367,501 385,518 420,558 450,584 472,598 490,620 505,628 523,631 541,643 558,636 567,610 592,555 612,526 645,493 665,470 698,441'],['E','g','715,430 735,420 768,396 803,361 820,358 905,284 923,292 958,286 978,277 995,264 1012,238 1062,167 1080,149 1097,137 1112,160 1132,188 1150,207 1185,263 1220,300 1237,311 1287,420'],['E','y','1300,440 1358,505 1390,514 1428,517 1462,555 1480,578 1498,592 1515,601 1550,601 1568,620'],['F','y','32,652'],['F','r','68,682 104,679 122,694 157,704 173,715 190,718 245,746 260,751 277,743 296,735 312,710 328,681'],['F','y','347,649 367,667'],['F','r','415,706 455,703 488,697 504,706 521,718 565,724 612,718 628,720 645,711 662,706 680,709 695,689'],['F','y','729,607 750,587 799,543 817,518 834,496 868,514 886,511 920,440'],['F','g','940,400 957,372 974,350 1008,317 1042,272 1060,265 1090,248 1115,247 1132,253 1148,268 1182,350 1216,402 1232,419'],['F','y','1252,443 1270,458 1305,501 1335,532 1365,554 1392,581 1440,595 1465,613 1512,661 1530,661 1546,653 1568,640'],['G','y','30,635 48,625 70,635 102,652'],['G','r','120,670'],['G','y','154,658'],['G','r','172,674 205,686 241,704 261,692 275,677'],['G','y','295,640 328,585 362,500 383,482 398,472 417,466 433,448'],['G','g','451,433 466,433'],['G','y','485,440'],['G','g','502,433 519,424 536,433'],['G','y','553,464 570,492 590,514 642,541 660,565 677,587 712,596 728,611 745,613 765,596 780,612 798,619 818,619 835,625 850,634 868,646 885,640 935,586 957,558 975,528 1008,463 1022,450'],['G','g','1040,438 1075,418 1098,421 1113,427 1130,416 1148,396 1165,382']],{y:'#f0f010',g:'#08e008',r:'#f00808'},1.200);
o+=rect(1834,850.500,46,12,'#00ff00','rx="3"')+txt(1837,861,'33.5296','#000',39);
adx.innerHTML=o;

/* letter spacing that gives each caption its column width */
const space=(e,w,cur)=>e.style.letterSpacing=((w-cur)/e.textContent.length).toFixed(3)+'px';
document.querySelectorAll('[data-w]').forEach(e=>space(e,+e.dataset.w,e.getBoundingClientRect().width));
document.querySelectorAll('[data-h]').forEach(e=>space(e,+e.dataset.h,e.getBoundingClientRect().height));
document.querySelectorAll('[data-t]').forEach(e=>{const r=document.createRange();r.selectNodeContents(e);space(e,+e.dataset.t,r.getBoundingClientRect().width)});
</script>
</body>
</html>
